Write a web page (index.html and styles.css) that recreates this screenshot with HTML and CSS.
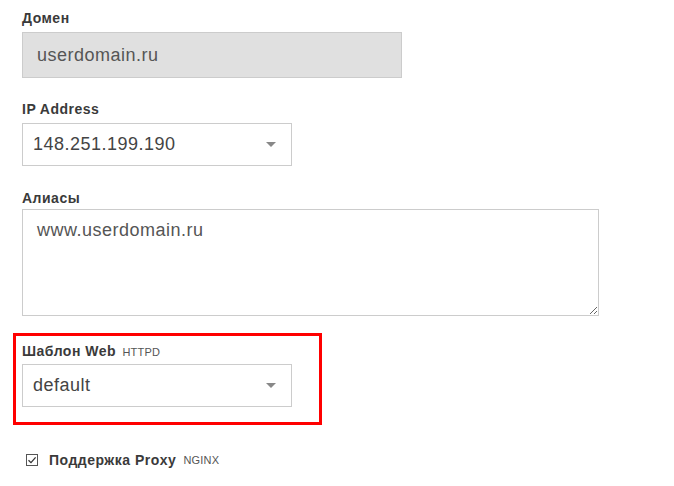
FILE: index.html
```html
<!DOCTYPE html>
<html lang="ru">
<head>
<meta charset="utf-8">
<title>Домен</title>
<link rel="stylesheet" href="styles.css">
</head>
<body>
<form class="form">
  <div class="field field-domain">
    <label class="label">Домен</label>
    <input class="input input-disabled" type="text" value="userdomain.ru" readonly>
  </div>
  <div class="field field-ip">
    <label class="label">IP Address</label>
    <div class="select">
      <span class="select-value">148.251.199.190</span>
      <span class="select-arrow"></span>
    </div>
  </div>
  <div class="field field-alias">
    <label class="label">Алиасы</label>
    <textarea class="textarea">www.userdomain.ru</textarea>
  </div>
  <div class="highlight">
    <label class="label">Шаблон Web <span class="tag">HTTPD</span></label>
    <div class="select">
      <span class="select-value">default</span>
      <span class="select-arrow"></span>
    </div>
  </div>
  <div class="check-row">
    <span class="checkbox">
      <svg width="12" height="12" viewBox="0 0 12 12"><path d="M2.5 6.2 L5 8.6 L9.6 3.4" fill="none" stroke="#333" stroke-width="1.3"/></svg>
    </span>
    <span class="check-label">Поддержка Proxy</span>
    <span class="tag tag-nginx">NGINX</span>
  </div>
</form>
</body>
</html>
```

FILE: styles.css
```css
html, body {
  margin: 0;
  padding: 0;
  background: #fff;
}
body {
  font-family: "Liberation Sans", Arial, sans-serif;
  color: #333;
}
.form {
  padding: 10px 0 0 22px;
}
.field {
  display: flex;
  flex-direction: column;
  align-items: flex-start;
}
.label {
  display: block;
  font-size: 14px;
  line-height: 16px;
  font-weight: bold;
  letter-spacing: 0.5px;
  color: #3a3a3a;
  margin-bottom: 6px;
}
.tag {
  font-size: 11px;
  font-weight: normal;
  letter-spacing: 0.2px;
  color: #555;
  margin-left: 2px;
}
.input {
  box-sizing: border-box;
  width: 380px;
  height: 46px;
  border: 1px solid #ccc;
  padding: 0 14px;
  font-family: "Liberation Sans", Arial, sans-serif;
  font-size: 18px;
  letter-spacing: 0.5px;
  color: #555;
  outline: none;
  margin: 0;
}
.input-disabled {
  background: #e0e0e0;
}
.field-ip {
  margin-top: 23px;
}
.select {
  box-sizing: border-box;
  position: relative;
  width: 270px;
  height: 43px;
  border: 1px solid #ccc;
  background: #fff;
  display: flex;
  align-items: center;
  padding: 0 10px;
  font-size: 18px;
  letter-spacing: 0.5px;
  color: #444;
}
.select-value {
  flex: 1;
}
.select-arrow {
  width: 0;
  height: 0;
  border-left: 5px solid transparent;
  border-right: 5px solid transparent;
  border-top: 5px solid #888;
  margin-right: 5px;
}
.field-alias {
  margin-top: 24px;
}
.field-alias .label {
  margin-bottom: 3px;
}
.textarea {
  box-sizing: border-box;
  width: 577px;
  height: 107px;
  border: 1px solid #ccc;
  padding: 9px 14px;
  margin: 0;
  font-family: "Liberation Sans", Arial, sans-serif;
  font-size: 18px;
  letter-spacing: 0.5px;
  line-height: 22px;
  color: #555;
  resize: both;
  outline: none;
}
.highlight {
  box-sizing: border-box;
  width: 309px;
  height: 92px;
  margin: 17px 0 0 -9px;
  border: 3px solid #f00;
  padding: 7px 0 0 6px;
}
.highlight .label {
  margin-bottom: 4px;
}
.check-row {
  display: flex;
  align-items: center;
  margin: 27px 0 0 4px;
  height: 16px;
}
.checkbox {
  box-sizing: border-box;
  width: 12px;
  height: 12px;
  border: 1px solid #555;
  display: flex;
  align-items: center;
  justify-content: center;
  background: #fff;
}
.checkbox svg {
  display: block;
  flex: none;
}
.check-label {
  margin-left: 11px;
  font-size: 14px;
  font-weight: bold;
  letter-spacing: 0.5px;
  color: #3a3a3a;
}
.tag-nginx {
  margin-left: 7px;
}
```
